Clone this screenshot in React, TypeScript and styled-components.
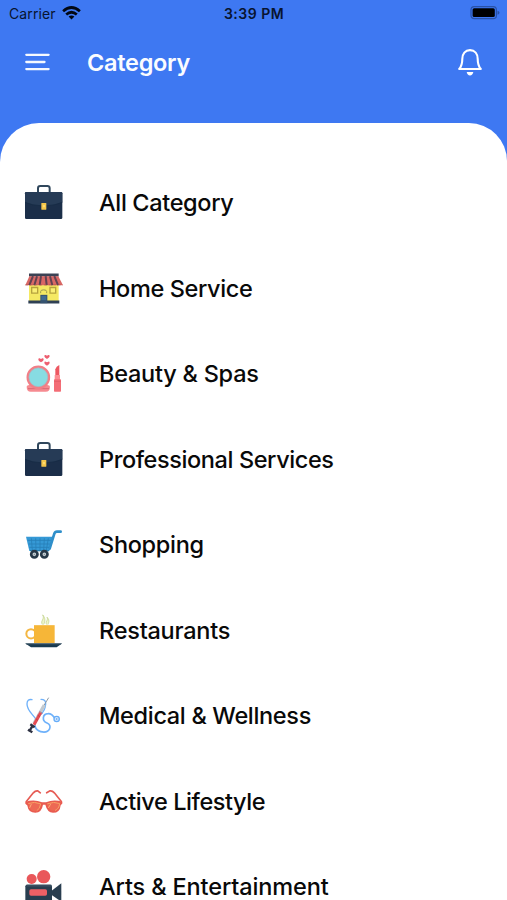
import React from "react";
import styled, { createGlobalStyle } from "styled-components";

const GlobalStyle = createGlobalStyle`
  * { box-sizing: border-box; }
  body { margin: 0; overflow: hidden; background: #3e78f2; }
`;

const Screen = styled.main`
  width: 100%;
  height: 100vh;
  display: flex;
  flex-direction: column;
  overflow: hidden;
  background: #3e78f2;
  font-family: Inter, "Liberation Sans", sans-serif;
`;

const StatusBar = styled.div`
  height: 28px;
  flex: none;
  display: grid;
  grid-template-columns: 1fr auto 1fr;
  align-items: center;
  padding: 0 7px 2px 9px;
  color: #08142f;
`;

const Carrier = styled.div`
  display: flex;
  align-items: center;
  gap: 6px;
  font-size: 14px;
  letter-spacing: 0.1px;
`;

const Clock = styled.div`
  margin-right: 1px;
  font-size: 14px;
  font-weight: 600;
  letter-spacing: 0.5px;
`;

const Battery = styled.svg`
  justify-self: end;
`;

const Header = styled.header`
  height: 95px;
  flex: none;
  display: flex;
  align-items: flex-start;
  padding: 17px 24px 0 25px;
`;

const IconButton = styled.button`
  display: flex;
  align-items: center;
  height: 34px;
  padding: 0;
  border: 0;
  background: none;
`;

const Title = styled.h1`
  flex: 1;
  margin: 0 0 0 37px;
  color: #fafcff;
  font-size: 23.5px;
  font-weight: 600;
  line-height: 35px;
  letter-spacing: -0.28px;
`;

const Sheet = styled.section`
  flex: 1;
  min-height: 0;
  overflow: hidden;
  padding-top: 37.4px;
  border-radius: 39px 38px 0 0;
  background: #fff;
`;

const List = styled.ul`
  margin: 0;
  padding: 0;
  list-style: none;
`;

const Row = styled.li`
  height: 85.5px;
  display: flex;
  align-items: center;
  gap: 35px;
  padding-left: 24px;
`;

const Art = styled.svg`
  flex: none;
  width: 40px;
  height: 44px;
`;

const Label = styled.span<{ $tracking: number }>`
  color: #090909;
  font-size: 23.5px;
  line-height: 30px;
  font-weight: 450;
  white-space: nowrap;
  letter-spacing: ${(p) => p.$tracking}px;
`;

const Briefcase = () => (
  <Art viewBox="27 18 120 132">
    <path d="M69 52V40q0-7 7-7h21q7 0 7 7v12" fill="none" stroke="#30475c" strokeWidth="6" />
    <rect x="30" y="51" width="112" height="81" rx="4" fill="#1b2e49" />
    <path d="M30 55q0-4 4-4h104q4 0 4 4v27q-22 9-45 10H76Q52 91 30 82z" fill="#263b56" />
    <path d="M30 82q22 9 46 10h21q23-1 45-10" fill="none" stroke="#142842" strokeWidth="2" />
    <rect x="79" y="84" width="15" height="20" rx="1" fill="#f5c64a" />
    <path d="M84 90h6v7h-6z" fill="#ffdc72" />
  </Art>
);

const House = () => (
  <Art viewBox="27 19.5 120 132">
    <path d="M42 68h89v55H42z" fill="#f5e963" />
    <path d="M42 39h89v9H42z" fill="#3c4254" />
    <path d="M43 47h87l14 27H31z" fill="#d96764" />
    <path d="M54 47 43 74M66 47l-8 27M78 47l-4 27M92 47l3 27M105 47l7 27M118 47l11 27" stroke="#614251" strokeWidth="6" />
    <path d="M31 73h113" stroke="#ad5351" strokeWidth="2" strokeDasharray="8 6" />
    <path d="M50 81h18v17H50zM105 81h17v17h-17z" fill="#faef75" stroke="#b6a33e" strokeWidth="4" />
    <path d="M77 98v-5q0-5 9-5t9 5v5" fill="none" stroke="#9b9950" strokeWidth="3" />
    <path d="M40 120h93v9H40z" fill="#2f4054" />
    <path d="M76 103h21v25H76z" fill="#355370" />
    <path d="M79 106h15v13H79z" fill="#416b91" />
  </Art>
);

const Beauty = () => (
  <Art viewBox="27 21 120 132">
    <path d="M35 125q0-5 8-5h54q8 0 8 5 0 15-13 15H47q-12 0-12-15z" fill="#f68b91" />
    <path d="M39 131h63" stroke="#da6974" strokeWidth="3" />
    <circle cx="70" cy="97" r="32" fill="#87dce2" stroke="#f17f87" strokeWidth="7" />
    <circle cx="70" cy="97" r="28" fill="none" stroke="#a4b9c1" strokeWidth="2" />
    <path d="M70 44q0-5 4-4l4 2 4-2q4-1 4 4 0 4-8 8-8-4-8-8zM88 34q0-5 4-4l4 2 4-2q4-1 4 4 0 4-8 8-8-4-8-8zM88 54q0-5 4-4l4 2 4-2q4-1 4 4 0 4-8 8-8-4-8-8z" fill="#ed5f70" />
    <path d="M121 92V73q2-9 12-13v32z" fill="#ed5761" />
    <path d="M119 90h16v16h-16z" fill="#fc8c91" />
    <rect x="117" y="103" width="21" height="37" rx="2" fill="#f36d76" />
    <path d="M118 109h19" stroke="#d95964" strokeWidth="2" />
  </Art>
);

const Cart = () => (
  <Art viewBox="27 9 120 132">
    <path d="M33 50h83l-13 43H43z" fill="#3599d6" />
    <path d="m104 86 14-45q2-6 8-6h11" fill="none" stroke="#2f8fca" strokeWidth="8" strokeLinecap="round" strokeLinejoin="round" />
    <path d="M38 61h69M41 72h63M43 82h59M49 55l3 36M62 55l1 36M75 55v36M88 55l-2 36M100 55l-6 36" fill="none" stroke="#2680b8" strokeWidth="2.5" />
    <path d="M45 92h57" stroke="#247bac" strokeWidth="4" />
    <circle cx="58" cy="103" r="9.5" fill="#c4cdd2" stroke="#263848" strokeWidth="8" />
    <circle cx="88" cy="103" r="9.5" fill="#c4cdd2" stroke="#263848" strokeWidth="8" />
    <circle cx="58" cy="103" r="2" fill="#758792" />
    <circle cx="88" cy="103" r="2" fill="#758792" />
  </Art>
);

const Cup = () => (
  <Art viewBox="27 10.5 120 132">
    <path d="M82 57c-7-12 8-15 1-29 9 10 8 20 3 29M95 57c-6-9 6-12 1-22 8 8 6 15 3 22" fill="#eef5c9" stroke="#bdcf83" strokeWidth="2" />
    <circle cx="48" cy="85" r="14" fill="none" stroke="#f4b743" strokeWidth="6" />
    <path d="M57 59h62v54H57z" fill="#f6b638" />
    <path d="M31 114h110l-16 11H48z" fill="#193a50" />
    <path d="M31 114h110l-4 3H35z" fill="#344c5f" />
  </Art>
);

const Medical = () => (
  <Art viewBox="27 12 120 132">
    <path d="M51 29q-15-3-15 13c0 20 17 30 27 46M78 28q15 0 14 14-1 17-13 30" fill="none" stroke="#6eb1fa" strokeWidth="4" strokeLinecap="round" />
    <path d="M63 86c-7 14-5 34 14 39 29 7 36-20 19-26-16-6-14-27 3-28 12-1 18 10 22 16" fill="none" stroke="#6eb1fa" strokeWidth="5" strokeLinecap="round" />
    <circle cx="125" cy="87" r="8" fill="#d5e9ff" stroke="#67adf8" strokeWidth="4" />
    <circle cx="125" cy="87" r="2.5" fill="#559ce8" />
    <path d="m101 23-14 23" stroke="#8f99a2" strokeWidth="3" />
    <path d="M88 45 57 101" stroke="#c2c9cf" strokeWidth="10" />
    <path d="M77 68 57 104" stroke="#e64b52" strokeWidth="9" />
    <path d="m73 64 10 6M67 75l8 5M61 86l8 5" stroke="#9f3445" strokeWidth="1.5" />
    <path d="m46 103 13 9M53 107 44 122M39 119l13 8" stroke="#2e3243" strokeWidth="7" />
  </Art>
);

const Glasses = () => (
  <Art viewBox="27 13.5 120 132">
    <path d="m34 78 21-26q6-7 13-6l8 6M139 78l-21-26q-6-7-13-6l-10 6" fill="none" stroke="#e65b54" strokeWidth="5" strokeLinecap="round" />
    <path d="M31 79q26-8 50 1h12q24-9 49-1v5l-5 5q-2 23-23 23-17 0-23-24h-7q-4 24-23 24-21 0-24-22l-6-5z" fill="#e95b50" />
    <path d="M40 84q18-7 37 1-2 20-17 22-18 1-20-23zM96 85q20-8 38-1-1 20-20 22-14 0-18-21z" fill="#ed6954" />
    <path d="M40 84q18-7 37 1-2 16-12 21M97 85q19-8 37-1-2 17-14 21" fill="none" stroke="#f8a366" strokeWidth="3" />
    <path d="m49 86-5 11M107 86l-7 11" stroke="#ffab76" strokeWidth="3" />
  </Art>
);

const Camera = () => (
  <Art viewBox="27 30 120 132">
    <circle cx="50" cy="72" r="15" fill="#e9575a" />
    <circle cx="86" cy="65" r="20" fill="#e9575a" />
    <rect x="31" y="89" width="80" height="58" rx="5" fill="#293e50" />
    <path d="M34 89h75v6H34z" fill="#384d60" />
    <path d="m110 107 29-22v55l-29-20z" fill="#293e50" />
    <rect x="43" y="103" width="53" height="19" rx="5" fill="#ef6065" />
  </Art>
);

const categories = [
  { name: "All Category", Icon: Briefcase, tracking: -0.35 },
  { name: "Home Service", Icon: House, tracking: -0.38 },
  { name: "Beauty & Spas", Icon: Beauty, tracking: -0.24 },
  { name: "Professional Services", Icon: Briefcase, tracking: -0.4 },
  { name: "Shopping", Icon: Cart, tracking: -0.3 },
  { name: "Restaurants", Icon: Cup, tracking: -0.24 },
  { name: "Medical & Wellness", Icon: Medical, tracking: -0.33 },
  { name: "Active Lifestyle", Icon: Glasses, tracking: -0.42 },
  { name: "Arts & Entertainment", Icon: Camera, tracking: -0.13 },
];

export default function App() {
  return (
    <>
      <GlobalStyle />
      <Screen>
        <StatusBar>
          <Carrier>
            Carrier
            <svg width="19" height="14" viewBox="0 0 19 14">
              <g fill="none" stroke="#020814" strokeWidth="2.7">
                <path d="M1.1 5.2q8.4-7.4 16.8 0" />
                <path d="M4.2 8.5q5.3-4.5 10.6 0" />
              </g>
              <path d="M6.6 10.6q2.9-2.3 5.8 0l-2.9 3z" fill="#020814" />
            </svg>
          </Carrier>
          <Clock>3:39 PM</Clock>
          <Battery width="30" height="14" viewBox="0 0 30 14">
            <rect x="1" y=".7" width="25.4" height="12" rx="3.2" fill="none" stroke="#2952a8" strokeWidth="1.2" />
            <rect x="2.6" y="2.3" width="22.2" height="8.8" rx="1.5" fill="#000" />
            <path d="M27.5 4.7q2 .7 2 2t-2 2z" fill="#2952a8" />
          </Battery>
        </StatusBar>
        <Header>
          <IconButton aria-label="Menu">
            <svg width="25" height="18" viewBox="0 0 25 18" stroke="#f5f9ff" strokeWidth="2.3" strokeLinecap="round">
              <path d="M1.3 1.8h22.3M1.3 9h18.2M1.3 16.1h22.3" />
            </svg>
          </IconButton>
          <Title>Category</Title>
          <IconButton aria-label="Notifications">
            <svg width="26" height="28" viewBox="0 0 26 28" fill="none" stroke="#fff" strokeWidth="2.1" strokeLinejoin="round">
              <path d="M2.2 21c2.5-3 3.1-5 3.1-10.1C5.3 5.8 8.2 2.1 13 2.1s7.7 3.7 7.7 8.8c0 5.1.6 7.1 3.1 10.1z" />
              <path d="M9.7 24h6.6q-.7 3.4-3.3 3.4T9.7 24z" fill="#fff" stroke="none" />
            </svg>
          </IconButton>
        </Header>
        <Sheet>
          <List>
            {categories.map(({ name, Icon, tracking }) => (
              <Row key={name}>
                <Icon />
                <Label $tracking={tracking}>{name}</Label>
              </Row>
            ))}
          </List>
        </Sheet>
      </Screen>
    </>
  );
}
